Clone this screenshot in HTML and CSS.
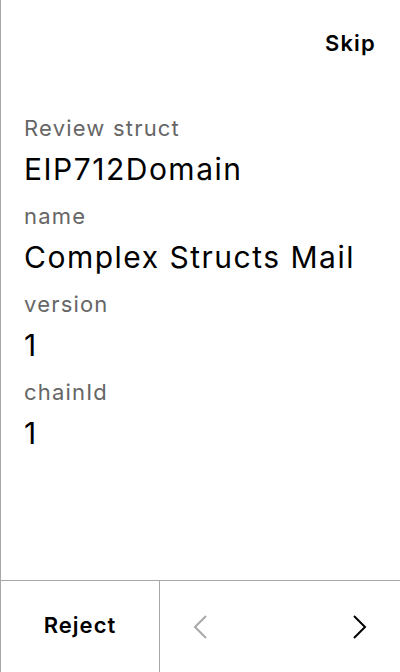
FILE: index.html
```html
<!DOCTYPE html>
<html lang="en">
<head>
<meta charset="utf-8">
<title>Review struct</title>
<link rel="stylesheet" href="styles.css">
</head>
<body>
<div class="screen">
  <header class="top">
    <button class="skip">Skip</button>
  </header>
  <main class="content">
    <div class="field">
      <div class="label">Review struct</div>
      <div class="value">EIP712Domain</div>
    </div>
    <div class="field">
      <div class="label">name</div>
      <div class="value">Complex Structs Mail</div>
    </div>
    <div class="field">
      <div class="label">version</div>
      <div class="value">1</div>
    </div>
    <div class="field">
      <div class="label">chainId</div>
      <div class="value">1</div>
    </div>
  </main>
  <footer class="bottom">
    <button class="reject">Reject</button>
    <div class="nav">
      <svg class="chev prev" width="16" height="24" viewBox="0 0 16 24"><path d="M14 1 L3 12 L14 23" fill="none" stroke="currentColor" stroke-width="2"/></svg>
      <svg class="chev next" width="16" height="24" viewBox="0 0 16 24"><path d="M2 1 L13 12 L2 23" fill="none" stroke="currentColor" stroke-width="2"/></svg>
    </div>
  </footer>
</div>
</body>
</html>
```
FILE: styles.css
```css
* { box-sizing: border-box; }
html, body { margin: 0; padding: 0; background: #fff; }
body { font-family: Inter, "Noto Sans", sans-serif; color: #000; }
.screen {
  width: 400px;
  height: 672px;
  display: flex;
  flex-direction: column;
  border-left: 1px solid #a8a8a8;
}
.top {
  height: 113px;
  display: flex;
  justify-content: flex-end;
  align-items: flex-start;
  padding: 28px 24px 0 0;
}
.skip {
  border: 0;
  background: none;
  padding: 0;
  font-family: inherit;
  font-size: 22px;
  font-weight: 600;
  letter-spacing: 1.2px;
  line-height: 30px;
  color: #000;
}
.content {
  flex: 1;
  padding: 0 23px;
}
.field { margin-bottom: 14px; }
.label {
  font-size: 22px;
  line-height: 30px;
  letter-spacing: 1.2px;
  color: #666;
}
.value {
  margin-top: 8px;
  font-size: 30px;
  line-height: 36px;
  letter-spacing: 1.5px;
  color: #000;
}
.bottom {
  height: 92px;
  border-top: 1px solid #a8a8a8;
  display: flex;
}
.reject {
  width: 159px;
  border: 0;
  border-right: 1px solid #a8a8a8;
  background: none;
  font-family: inherit;
  font-size: 22px;
  font-weight: 600;
  letter-spacing: 1px;
  color: #000;
  padding: 0 0 4px;
}
.nav {
  flex: 1;
  display: flex;
  justify-content: space-between;
  align-items: center;
  padding: 0 32px;
}
.chev { display: block; }
.prev { color: #a8a8a8; }
.next { color: #000; }
```
